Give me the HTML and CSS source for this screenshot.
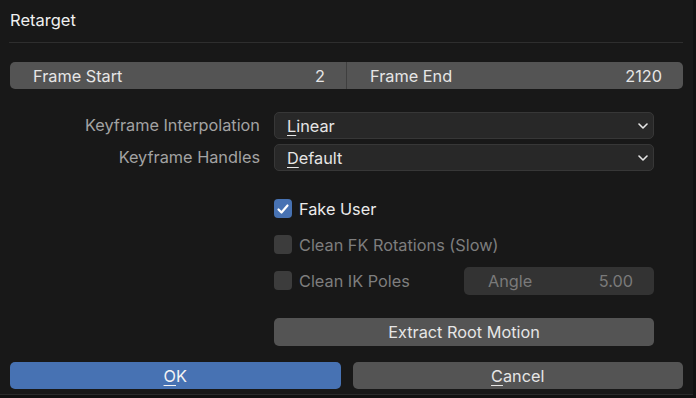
FILE: index.html
```html
<!DOCTYPE html>
<html lang="en">
<head>
    <meta charset="UTF-8">
    <title>Retarget</title>
    <link rel="stylesheet" href="styles.css">
</head>
<body>
    <div class="window">
        <div class="title">Retarget</div>
        <div class="separator"></div>

        <div class="frame-row">
            <div class="num-field"><span>Frame Start</span><span>2</span></div>
            <div class="num-field"><span>Frame End</span><span>2120</span></div>
        </div>

        <div class="props">
            <div class="prop-label">Keyframe Interpolation</div>
            <div class="dropdown">
                <span><u>L</u>inear</span>
                <svg class="chevron" width="10" height="6" viewBox="0 0 10 6"><path d="M1 1 L5 5 L9 1" fill="none" stroke="#e6e6e6" stroke-width="1.6" stroke-linecap="round" stroke-linejoin="round"/></svg>
            </div>
            <div class="prop-label">Keyframe Handles</div>
            <div class="dropdown">
                <span><u>D</u>efault</span>
                <svg class="chevron" width="10" height="6" viewBox="0 0 10 6"><path d="M1 1 L5 5 L9 1" fill="none" stroke="#e6e6e6" stroke-width="1.6" stroke-linecap="round" stroke-linejoin="round"/></svg>
            </div>
        </div>

        <div class="options">
            <div class="check-row">
                <span class="checkbox checked">
                    <svg width="18" height="18" viewBox="0 0 18 18"><path d="M4.5 9.5 L7.5 12.5 L13.5 5.5" fill="none" stroke="#fff" stroke-width="2.2" stroke-linecap="round" stroke-linejoin="round"/></svg>
                </span>
                <span class="check-label">Fake User</span>
            </div>
            <div class="check-row disabled">
                <span class="checkbox"></span>
                <span class="check-label">Clean FK Rotations (Slow)</span>
            </div>
            <div class="check-row disabled">
                <span class="checkbox"></span>
                <span class="check-label grow">Clean IK Poles</span>
                <div class="num-field small"><span>Angle</span><span>5.00</span></div>
            </div>
            <button class="btn extract">Extract Root Motion</button>
        </div>

        <div class="footer">
            <button class="btn primary"><u>O</u>K</button>
            <button class="btn"><u>C</u>ancel</button>
        </div>
    </div>
</body>
</html>
```

FILE: styles.css
```css
* { margin: 0; padding: 0; box-sizing: border-box; }
body { background: #111111; font-family: Inter, "Noto Sans", sans-serif; font-size: 16.3px; color: #e6e6e6; width: 696px; height: 398px; overflow: hidden; }
.window { width: 693px; height: 395px; background: #181818; border-bottom: 1px solid #2a2a2a; }
.title { height: 42px; padding: 10px 0 0 10px; font-size: 16.5px; color: #f0f0f0; }
.separator { height: 1px; background: #2e2e2e; margin: 0 10px 0 9px; }

.frame-row { display: flex; margin: 19px 10px 0 10px; height: 27px; width: 673px; background: #545454; border-radius: 5px; overflow: hidden; }
.num-field { flex: 1; display: flex; justify-content: space-between; align-items: center; padding: 0 21px 0 23px; color: #e6e6e6; }
.frame-row .num-field + .num-field { border-left: 1px solid #3f3f3f; }

.props { display: grid; grid-template-columns: 260px 380px; column-gap: 14px; row-gap: 5px; margin-top: 23px; }
.prop-label { text-align: right; color: #a3a3a3; line-height: 27px; }
.dropdown { height: 27px; background: #282828; border: 1px solid #373737; border-radius: 5px; display: flex; align-items: center; justify-content: space-between; padding: 0 5px 0 12px; color: #e6e6e6; }
.chevron { display: block; }
u { text-decoration-thickness: 1px; text-underline-offset: 3px; }

.options { margin: 24px 0 0 274px; width: 380px; display: flex; flex-direction: column; gap: 9px; }
.check-row { display: flex; align-items: center; height: 27px; gap: 7px; }
.checkbox { width: 18px; height: 19px; border-radius: 4px; background: #4a4a4a; display: flex; align-items: center; justify-content: center; flex: none; }
.checkbox.checked { background: #4772b3; }
.check-label { color: #ebebeb; }
.grow { flex: 1; }
.disabled .check-label { color: #7e7e7e; }
.disabled .checkbox { background: #3c3c3c; }
.num-field.small { flex: none; width: 190px; height: 28px; background: #333333; border-radius: 5px; padding: 0 21px 0 24px; color: #7a7a7a; }

.btn { height: 28px; border: none; border-radius: 5px; background: #545454; color: #e6e6e6; font-family: inherit; font-size: 16.3px; }
.extract { margin-top: 15px; width: 380px; }

.footer { display: flex; gap: 12px; margin: 16px 10px 0 10px; width: 673px; }
.footer .btn { flex: 1; height: 27px; }
.btn.primary { background: #4772b3; color: #f4f4f4; }
```
